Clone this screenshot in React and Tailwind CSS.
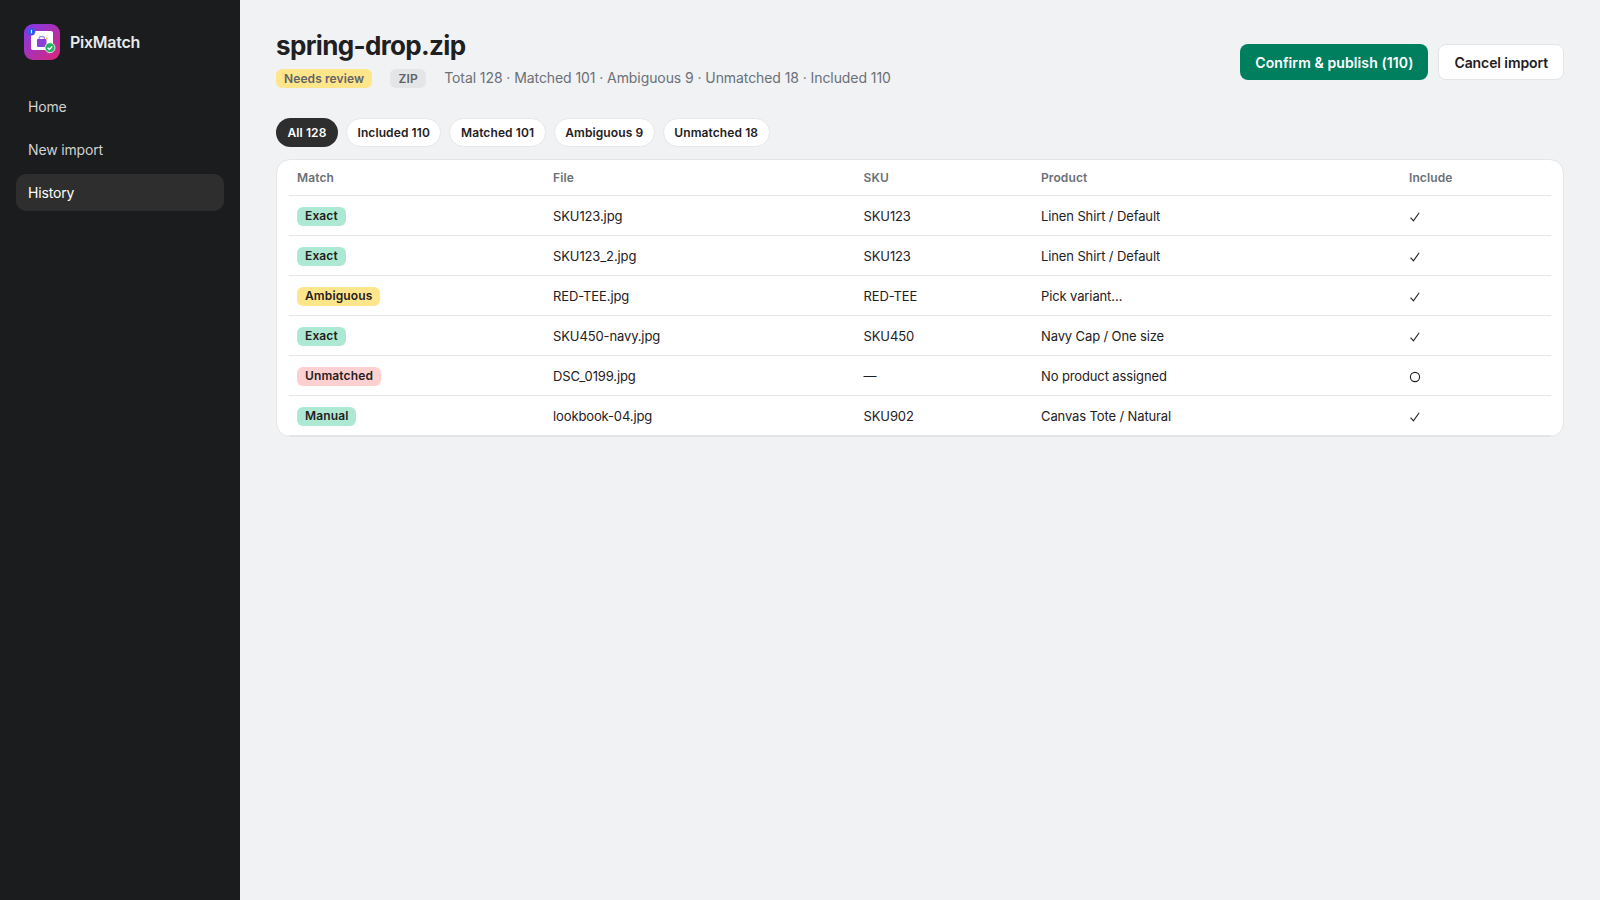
const rows = [
  ["Exact", "bg-[#ade8d3]", "SKU123.jpg", "SKU123", "Linen Shirt / Default", true],
  ["Exact", "bg-[#ade8d3]", "SKU123_2.jpg", "SKU123", "Linen Shirt / Default", true],
  ["Ambiguous", "bg-[#ffe68a]", "RED-TEE.jpg", "RED-TEE", "Pick variant…", true],
  ["Exact", "bg-[#ade8d3]", "SKU450-navy.jpg", "SKU450", "Navy Cap / One size", true],
  ["Unmatched", "bg-[#ffd0d0]", "DSC_0199.jpg", "—", "No product assigned", false],
  ["Manual", "bg-[#ade8d3]", "lookbook-04.jpg", "SKU902", "Canvas Tote / Natural", true],
];
const pills = ["Included 110", "Matched 101", "Ambiguous 9", "Unmatched 18"];

function Logo() {
  return (
    <svg width="36" height="36" viewBox="0 0 36 36" className="shrink-0">
      <defs>
        <linearGradient id="lg" x1="0" y1="0" x2="1" y2="1">
          <stop offset="0" stopColor="#7c3aed" />
          <stop offset="1" stopColor="#db2777" />
        </linearGradient>
      </defs>
      <rect width="36" height="36" rx="9" fill="url(#lg)" />
      <rect x="7" y="7" width="22" height="19" rx="2" fill="#fff" />
      <rect x="13" y="15" width="9.5" height="8" rx="1" fill="#8b3fd6" />
      <path d="M15 15c0-3.4 5.5-3.4 5.5 0" fill="none" stroke="#a78bda" strokeWidth="1.2" />
      <circle cx="23" cy="14.5" r="0.9" fill="#fbbf24" />
      <circle cx="7.4" cy="7.6" r="3.7" fill="#2563eb" stroke="#7c3aed" strokeWidth="0.6" />
      <rect x="6.9" y="5.8" width="1" height="3.4" fill="#fff" />
      <circle cx="26" cy="23.7" r="5" fill="#22b45f" stroke="#fff" strokeWidth="0.8" />
      <path d="M23.6 23.8l1.7 1.7 3-3.2" fill="none" stroke="#fff" strokeWidth="1.3" />
    </svg>
  );
}

export default function App() {
  return (
    <div className="flex min-h-[900px] bg-[#f1f2f4] text-[#1f2022] font-['Inter',sans-serif]">
      <aside className="w-[240px] shrink-0 bg-[#1a1c1e] px-4 pt-6">
        <div className="flex items-center gap-2.5 px-2 h-9">
          <Logo />
          <span className="text-[16px] font-semibold tracking-[-0.25px] text-[#e8e9ea]">PixMatch</span>
        </div>
        <nav className="mt-[28px] flex flex-col gap-1.5 tracking-[-0.15px]">
          <div className="h-[37px] flex items-center px-3 rounded-[10px] text-[14px] text-[#d0d1d3]">Home</div>
          <div className="h-[37px] flex items-center px-3 rounded-[10px] text-[14px] text-[#d0d1d3]">New import</div>
          <div className="h-[37px] flex items-center px-3 rounded-[10px] text-[14px] text-white bg-[#2e2e2e]">History</div>
        </nav>
      </aside>
      <main className="flex-1 px-9 pt-[28px]">
        <div className="flex items-start justify-between">
          <div>
            <h1 className="text-[26px] leading-[36px] font-bold tracking-[-0.65px] text-[#1f2022]">spring-drop.zip</h1>
            <div className="mt-[4px] flex items-center text-[14px] text-[#6b7076]">
              <span className="h-[19px] flex items-center px-2 rounded-[6px] bg-[#ffe68a] text-[12px] font-semibold tracking-[0.1px] text-[#5f6368]">Needs review</span>
              <span className="ml-[18px] h-[19px] w-9 flex items-center justify-center rounded-[6px] bg-[#e4e5e7] text-[12px] font-semibold tracking-[0.1px] text-[#5f6368]">ZIP</span>
              <span className="ml-[18px] -translate-y-px tracking-[-0.08px]">Total 128 · Matched 101 · Ambiguous 9 · Unmatched 18 · Included 110</span>
            </div>
          </div>
          <div className="mt-4 flex gap-[10px]">
            <button className="h-9 px-[15px] rounded-[8px] bg-[#007f5f] text-white text-[14px] font-semibold tracking-[0.1px]">Confirm &amp; publish (110)</button>
            <button className="h-9 px-[15px] rounded-[8px] bg-white border border-[#e4e5e7] text-[14px] font-semibold tracking-[-0.1px] text-[#1f2022]">Cancel import</button>
          </div>
        </div>
        <div className="mt-[29px] flex gap-2">
          <span className="h-[29px] flex items-center px-[11.5px] rounded-full bg-[#2e2e2e] text-white text-[12px] font-semibold tracking-[0.1px]">All 128</span>
          {pills.map((p) => (
            <span key={p} className="h-[29px] flex items-center px-[10.5px] rounded-full bg-white border border-[#e6e7e9] text-[12px] font-semibold tracking-[0.1px] text-[#1f2022]">{p}</span>
          ))}
        </div>
        <div className="mt-[12px] bg-white border border-[#e4e5e7] rounded-[14px] px-3">
          <table className="w-full table-fixed border-collapse">
            <colgroup>
              <col className="w-[256px]" />
              <col className="w-[310.5px]" />
              <col className="w-[177.5px]" />
              <col className="w-[368px]" />
              <col />
            </colgroup>
            <thead>
              <tr className="border-b border-[#e4e5e7] h-[35px]">
                {["Match", "File", "SKU", "Product", "Include"].map((h) => (
                  <th key={h} className="px-2 pt-[2px] text-left text-[12px] font-semibold tracking-[0.1px] text-[#6b7076]">{h}</th>
                ))}
              </tr>
            </thead>
            <tbody>
              {rows.map((r, i) => (
                <tr key={i} className="border-b border-[#e4e5e7] h-[40px] text-[13px] tracking-[-0.12px] text-[#1f2022]">
                  <td className="px-2 pt-[2px]">
                    <span className={"inline-flex h-[19px] items-center px-2 rounded-[6px] text-[12px] font-semibold tracking-[0.12px] " + r[1]}>{r[0]}</span>
                  </td>
                  <td className="px-2 pt-[3px]">{r[2]}</td>
                  <td className="px-2 pt-[3px]">{r[3]}</td>
                  <td className="px-2 pt-[3px]">{r[4]}</td>
                  <td className="px-2 pt-[3px]">
                    {r[5] ? (
                      <svg width="12" height="12" viewBox="0 0 12 12" fill="none" className="block -ml-[0.5px]">
                        <path d="M1.6 6.6l2.8 3.2L10.2 1.8" stroke="#1f2022" strokeWidth="1.1" />
                      </svg>
                    ) : (
                      <svg width="12" height="12" viewBox="0 0 12 12" fill="none" className="block -ml-[0.5px]">
                        <circle cx="6" cy="6" r="4.6" stroke="#1f2022" strokeWidth="1.1" />
                      </svg>
                    )}
                  </td>
                </tr>
              ))}
            </tbody>
          </table>
        </div>
      </main>
    </div>
  );
}
